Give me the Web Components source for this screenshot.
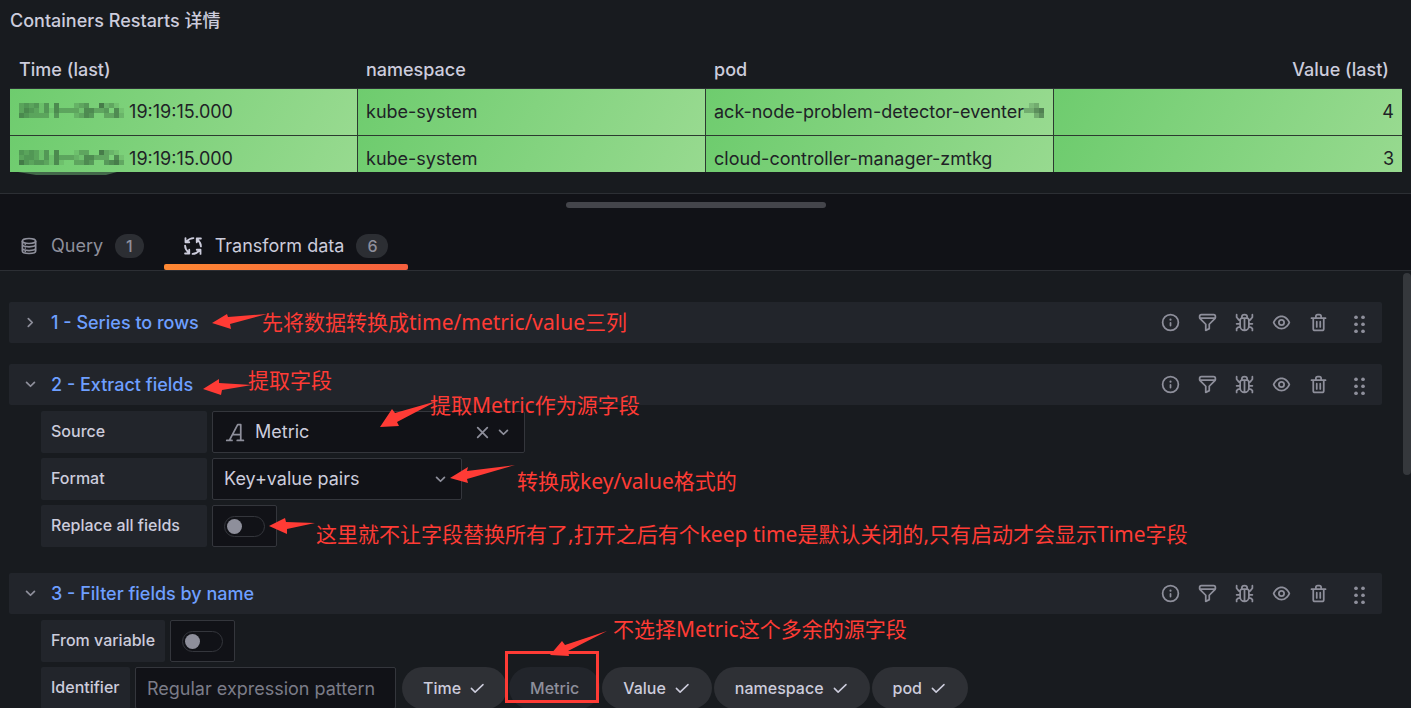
<!DOCTYPE html>
<html lang="zh-CN">
<head>
<meta charset="utf-8">
<title>Containers Restarts 详情</title>
<style>
  html, body { margin: 0; height: 100%; background: #111217; }
  body { overflow: hidden; }
</style>
</head>
<body>
<panel-editor>
  <restarts-panel slot="preview" heading="Containers Restarts 详情"></restarts-panel>
  <editor-tabs slot="tabs"></editor-tabs>

  <transform-row heading="1 - Series to rows"></transform-row>

  <transform-row heading="2 - Extract fields" open>
    <select-field caption="Source" value="Metric" icon="font" clearable style="--label: 166px; --control: 313px"></select-field>
    <select-field caption="Format" value="Key+value pairs" style="--label: 166px; --control: 250px"></select-field>
    <switch-field caption="Replace all fields" style="--label: 166px"></switch-field>
  </transform-row>

  <transform-row heading="3 - Filter fields by name" open>
    <switch-field caption="From variable" style="--label: 124px"></switch-field>
    <text-field caption="Identifier" hint="Regular expression pattern" style="--label: 89px; --control: 261px">
      <filter-pill selected>Time</filter-pill>
      <filter-pill>Metric</filter-pill>
      <filter-pill selected>Value</filter-pill>
      <filter-pill selected>namespace</filter-pill>
      <filter-pill selected>pod</filter-pill>
    </text-field>
  </transform-row>

  <note-layer slot="notes"></note-layer>
</panel-editor>

<script>
const ICONS = {
  info: '<path d="M12,2A10,10,0,1,0,22,12,10,10,0,0,0,12,2Zm0,18a8,8,0,1,1,8-8A8,8,0,0,1,12,20Zm0-8.5a1,1,0,0,0-1,1v3a1,1,0,0,0,2,0v-3A1,1,0,0,0,12,11.5Zm0-4a1.25,1.25,0,1,0,1.25,1.25A1.25,1.25,0,0,0,12,7.5Z"/>',
  filter: '<path d="M19,2H5A3,3,0,0,0,2,5V6.17a3,3,0,0,0,.25,1.2l0,.06a2.81,2.81,0,0,0,.59.86L9,14.41V21a1,1,0,0,0,.47.85A1,1,0,0,0,10,22a1,1,0,0,0,.45-.11l4-2A1,1,0,0,0,15,19V14.41l6.12-6.12a2.81,2.81,0,0,0,.59-.86l0-.06A3,3,0,0,0,22,6.17V5A3,3,0,0,0,19,2ZM13.29,13.29A1,1,0,0,0,13,14v4.38l-2,1V14a1,1,0,0,0-.29-.71L5.41,8H18.59ZM20,6H4V5A1,1,0,0,1,5,4H19a1,1,0,0,1,1,1Z"/>',
  bug: '<g fill="none" stroke="currentColor" stroke-width="2" stroke-linecap="round" stroke-linejoin="round"><path d="M7 9.500Q7 7 9.500 7h5Q17 7 17 9.500V16a5 5 0 0 1-10 0ZM12 7v14M9 7V5.500a3 2.500 0 0 1 6 0V7M7 9.500L5.500 9 3 6V3M17 9.500l1.500-.5L21 6V3M7 13.500H3M17 13.500h4M7 17l-2.500.5L3 19v2M17 17l2.500.5L21 19v2"/></g>',
  eye: '<path d="M21.92,11.6C19.9,6.91,16.1,4,12,4S4.1,6.91,2.08,11.6a1,1,0,0,0,0,.8C4.1,17.09,7.9,20,12,20s7.9-2.91,9.92-7.6A1,1,0,0,0,21.92,11.6ZM12,18c-3.17,0-6.17-2.29-7.9-6C5.83,8.29,8.83,6,12,6s6.17,2.29,7.9,6C18.17,15.71,15.17,18,12,18ZM12,8a4,4,0,1,0,4,4A4,4,0,0,0,12,8Zm0,6a2,2,0,1,1,2-2A2,2,0,0,1,12,14Z"/>',
  trash: '<path d="M10,18a1,1,0,0,0,1-1V11a1,1,0,0,0-2,0v6A1,1,0,0,0,10,18ZM20,6H16V5a3,3,0,0,0-3-3H11A3,3,0,0,0,8,5V6H4A1,1,0,0,0,4,8H5V19a3,3,0,0,0,3,3h8a3,3,0,0,0,3-3V8h1a1,1,0,0,0,0-2ZM10,5a1,1,0,0,1,1-1h2a1,1,0,0,1,1,1V6H10Zm7,14a1,1,0,0,1-1,1H8a1,1,0,0,1-1-1V8H17Zm-3-1a1,1,0,0,0,1-1V11a1,1,0,0,0-2,0v6A1,1,0,0,0,14,18Z"/>',
  grip: '<circle cx="8" cy="6" r="2.100"/><circle cx="16" cy="6" r="2.100"/><circle cx="8" cy="14" r="2.100"/><circle cx="16" cy="14" r="2.100"/><circle cx="8" cy="22" r="2.100"/><circle cx="16" cy="22" r="2.100"/>',
  right: '<path d="M9.500 7.500l4.500 4.500-4.500 4.500" fill="none" stroke="currentColor" stroke-width="2" stroke-linecap="round" stroke-linejoin="round"/>',
  down: '<path d="M7.500 9.500l4.500 4.500 4.500-4.500" fill="none" stroke="currentColor" stroke-width="2" stroke-linecap="round" stroke-linejoin="round"/>',
  times: '<path d="M6.500 6.500l11 11M17.500 6.500l-11 11" fill="none" stroke="currentColor" stroke-width="2" stroke-linecap="round"/>',
  check: '<path d="M4.500 12.500l5 5L20 7.500" fill="none" stroke="currentColor" stroke-width="2" stroke-linecap="round" stroke-linejoin="round"/>',
  font: '<path d="M2 21h6M14 21h7M5 21L14.500 3H18v18M8.500 14.500H18" fill="none" stroke="currentColor" stroke-width="2" stroke-linecap="round" stroke-linejoin="round"/>',
  database: '<g fill="none" stroke="currentColor" stroke-width="2"><ellipse cx="12" cy="6" rx="8" ry="3"/><path d="M4 6v12c0 1.700 3.600 3 8 3s8-1.300 8-3V6M4 10c0 1.700 3.600 3 8 3s8-1.300 8-3M4 14.500c0 1.700 3.600 3 8 3s8-1.300 8-3"/></g><circle cx="7.500" cy="10" r="1"/><circle cx="7.500" cy="14.500" r="1"/><circle cx="7.500" cy="18.500" r="1"/>',
  process: [0, 90, 180, 270].map(a => `<path transform="rotate(${a} 12 12)" d="M12.500 2.500Q8 2.500 4.500 6.500M3 2.500V7.500H7.500" fill="none" stroke="currentColor" stroke-width="2.200" stroke-linecap="round" stroke-linejoin="round"/>`).join('')
};

const RESET = `
  *, *::before, *::after { box-sizing: border-box; }
  :host { display: block; }
  button, input, select { font: inherit; color: inherit; margin: 0; padding: 0; border: 0; background: none; }
`;

class Base extends HTMLElement {
  connectedCallback() {
    if (this.shadowRoot) return;
    this.attachShadow({ mode: 'open' }).innerHTML = `<style>${RESET}${this.css()}</style>${this.html()}`;
  }
  css() { return ''; }
}

customElements.define('ui-icon', class extends Base {
  css() { return `
    :host { display: inline-flex; flex: none; width: var(--size, 21px); height: var(--size, 21px); }
    svg { width: 100%; height: 100%; overflow: visible; fill: currentColor; }`; }
  html() { return `<svg viewBox="0 0 24 24" aria-hidden="true">${ICONS[this.getAttribute('name')]}</svg>`; }
});

customElements.define('panel-editor', class extends Base {
  css() { return `
    :host { display: flex; flex-direction: column; height: 100vh; position: relative; overflow: hidden;
      font: 400 18px/24px Inter, "Noto Sans CJK SC", sans-serif; color: #ccccdc; background: #111217; }
    .handle { flex: none; display: flex; justify-content: center; padding: 8px 20px 14px 0; }
    .handle i { width: 260px; height: 6px; border-radius: 3px; background: #44454b; }
    .body { flex: 1; min-height: 0; display: flex; background: #181b1f; border-top: 1px solid #2c2f34; }
    .list { flex: 1; min-width: 0; display: flex; flex-direction: column; gap: 21px; padding: 31px 21px 0 9px; overflow: hidden; }
    .bar { flex: none; width: 8px; height: 202px; margin-top: 2px; border-radius: 4px; background: #35383c; }`; }
  html() { return `
    <slot name="preview"></slot>
    <div class="handle"><i></i></div>
    <slot name="tabs"></slot>
    <div class="body"><main class="list"><slot></slot></main><div class="bar"></div></div>
    <slot name="notes"></slot>`; }
});

/* Blocks of pixels that hide part of a value */
customElements.define('pixel-mask', class extends Base {
  css() { return `
    :host { display: inline-block; vertical-align: baseline; }
    svg { display: block; }`; }
  html() {
    const rows = this.getAttribute('rows').split('/').map(r => [...r].map(Number));
    const w = rows[0].length * 5, h = rows.length * 5;
    const cells = rows.flatMap((r, y) => r.map((v, x) =>
      v ? `<rect x="${x * 5}" y="${y * 5}" width="5" height="5" fill-opacity="${v / 10}"/>` : ''));
    return `<svg width="${w}" height="${h}" fill="#24452c" shape-rendering="crispEdges" aria-hidden="true">${cells.join('')}</svg>`;
  }
});

customElements.define('restarts-panel', class extends Base {
  css() { return `
    :host { flex: none; background: #181b1f; border-bottom: 1px solid #2c2f34; }
    h2 { margin: 0; padding: 9px 10px 8px; font-size: 18px; line-height: 24px; font-weight: 500; }
    .clip { margin: 9px 9px 0 10px; height: 122px; overflow: hidden; }
    table { width: 100%; table-layout: fixed; border-spacing: 0; }
    th, td { height: 47px; padding: 0 8px 0 9px; text-align: left; white-space: nowrap; }
    th { height: 39px; padding-top: 2px; font-weight: 500; border-bottom: 1px solid #2c2f34; }
    td { color: #202226; background: linear-gradient(120deg, #6ecc6e, #98da90); border-bottom: 1px solid #2c3a30; }
    td + td, th + th { padding-left: 8px; }
    td:not(:last-child) { border-right: 1px solid #2c3a30; }
    th:last-child { padding-right: 13px; }
    th:last-child, td:last-child { text-align: right; }
    .smear { height: 21px; padding-left: 18px; }
    .smear svg { display: block; }`; }
  html() {
    const a = '343414050002340062310/354314153333155334051/543333040002354003352';
    const b = '434314050001330063210/344314153332155333051/643443151003354004563';
    const time = m => `<pixel-mask rows="${m}"></pixel-mask> 19:19:15.000`;
    return `
    <h2>${this.getAttribute('heading')}</h2>
    <div class="clip"><table>
      <thead><tr><th>Time (last)</th><th>namespace</th><th>pod</th><th>Value (last)</th></tr></thead>
      <tbody>
        <tr><td>${time(a)}</td><td>kube-system</td><td>ack-node-problem-detector-eventer<pixel-mask rows="0230/3356/0035"></pixel-mask></td><td>4</td></tr>
        <tr><td>${time(b)}</td><td>kube-system</td><td>cloud-controller-manager-zmtkg</td><td>3</td></tr>
      </tbody></table></div>
    <div class="smear"><svg width="100" height="3" fill="#43694a" aria-hidden="true"><path d="M0 0H99L88 3H18Z"/></svg></div>`;
  }
});

customElements.define('editor-tabs', class extends Base {
  css() { return `
    :host { flex: none; }
    nav { display: flex; height: 48px; align-items: flex-end; }
    a { position: relative; display: flex; align-items: center; gap: 12px; height: 49px; padding: 0 20px 0 19px; color: #8e8f9b; text-decoration: none; }
    a[aria-current] { color: #ccccdc; }
    a[aria-current]::after { content: ""; position: absolute; left: 0; right: 0; bottom: 0; height: 6px; border-radius: 2px; background: linear-gradient(90deg, #ff8833, #f55f3e); }
    b { padding: 0 11px; border-radius: 12px; font-size: 16px; font-weight: 500; line-height: 24px; color: #8e8f9b; background: #2c2e33; }
    ui-icon { --size: 20px; }`; }
  html() { return `<nav>
    <a href="#query"><ui-icon name="database"></ui-icon>Query<b>1</b></a>
    <a href="#transform" aria-current="page"><ui-icon name="process"></ui-icon>Transform data<b>6</b></a></nav>`; }
});

customElements.define('transform-row', class extends Base {
  css() { return `
    header { display: flex; align-items: center; height: 41px; padding: 0 12px 0 11px; border-radius: 2px; background: #22252b; color: #8e8f9b; }
    button { display: flex; cursor: pointer; }
    .title { flex: 1; align-items: center; gap: 10px; text-align: left; }
    h3 { margin: 0; font-size: 18px; line-height: 24px; font-weight: 500; color: #6e9fff; }
    .tools { display: flex; align-items: center; gap: 16px; margin-right: 20px; }
    .body { display: flex; flex-direction: column; gap: 5px; padding: 6px 0 5px 32px; }`; }
  html() {
    const open = this.hasAttribute('open');
    const tools = [['info', 'Help'], ['filter', 'Filter'], ['bug', 'Debug'], ['eye', 'Disable'], ['trash', 'Remove']];
    return `<header>
      <button class="title" aria-expanded="${open}"><ui-icon name="${open ? 'down' : 'right'}"></ui-icon><h3>${this.getAttribute('heading')}</h3></button>
      <div class="tools">${tools.map(([i, t]) => `<button aria-label="${t}"><ui-icon name="${i}"></ui-icon></button>`).join('')}</div>
      <button aria-label="Move"><ui-icon name="grip"></ui-icon></button></header>
      ${open ? '<div class="body"><slot></slot></div>' : ''}`;
  }
});

class Field extends Base {
  css() { return `
    :host { display: flex; gap: 5px; min-height: 42px; }
    label { flex: none; width: var(--label); height: 42px; padding: 0 10px; border-radius: 2px; background: #22252b; font-size: 16px; font-weight: 500; line-height: 41px; white-space: nowrap; }
    .control { flex: none; position: relative; width: var(--control); height: 42px; display: flex; align-items: center; background: #111217; border: 1px solid #34363c; border-radius: 2px; }`; }
  html() { return `<label for="c">${this.getAttribute('caption')}</label>${this.control()}<slot></slot>`; }
}

customElements.define('select-field', class extends Field {
  css() { return super.css() + `
    select { appearance: none; width: 100%; height: 100%; padding-left: 11px; outline: 0; }
    .lead { position: absolute; left: 12px; top: 10px; color: #8e8f9b; }
    .lead + select { padding-left: 42px; }
    .end { position: absolute; right: 10px; top: 10px; display: flex; color: #8e8f9b; pointer-events: none; }
    .end button { pointer-events: auto; display: flex; }`; }
  control() {
    const icon = this.getAttribute('icon');
    return `<div class="control">${icon ? `<ui-icon class="lead" name="${icon}"></ui-icon>` : ''}
      <select id="c"><option>${this.getAttribute('value')}</option></select>
      <span class="end">${this.hasAttribute('clearable') ? '<button aria-label="Clear"><ui-icon name="times"></ui-icon></button>' : ''}<ui-icon name="down"></ui-icon></span></div>`;
  }
});

customElements.define('switch-field', class extends Field {
  css() { return super.css() + `
    .control { width: 65px; justify-content: center; }
    input { appearance: none; width: 41px; height: 21px; border: 1px solid #34363c; border-radius: 11px; padding: 2px; }
    input::before { content: ""; display: block; width: 15px; height: 15px; border-radius: 50%; background: #8e8f9b; }
    input:checked::before { margin-left: auto; }`; }
  control() { return '<div class="control"><input id="c" type="checkbox" role="switch"></div>'; }
});

customElements.define('text-field', class extends Field {
  css() { return super.css() + `
    :host { flex-wrap: wrap; gap: 5px 2px; }
    label { margin-right: 3px; }
    .control { margin-right: 4px; }
    input { width: 100%; height: 100%; padding: 0 11px; outline: 0; }
    input::placeholder { color: #7b7c88; opacity: 1; }`; }
  control() { return `<div class="control"><input id="c" type="text" placeholder="${this.getAttribute('hint')}"></div>`; }
});

customElements.define('filter-pill', class extends Base {
  css() { return `
    button { display: flex; align-items: center; gap: 7px; height: 42px; padding: 0 21px; border-radius: 21px; font-size: 16px; font-weight: 500; background: #22252b; color: #8e8f9b; cursor: pointer; }
    :host([selected]) button { background: #2e3035; color: #ccccdc; }
    ui-icon { --size: 18px; }`; }
  html() {
    const on = this.hasAttribute('selected');
    return `<button aria-pressed="${on}"><slot></slot>${on ? '<ui-icon name="check"></ui-icon>' : ''}</button>`;
  }
});

/* Red hand-placed remarks with arrows, floating over the editor */
customElements.define('note-layer', class extends Base {
  css() { return `
    :host { position: absolute; inset: 0; pointer-events: none; overflow: hidden; color: #ff3b35;
      font: 400 21px/24px "Noto Sans", "Noto Sans CJK SC", sans-serif; }
    svg { position: absolute; left: 0; top: 0; width: 100%; height: 100%; }
    span { position: absolute; white-space: nowrap; }`; }
  html() {
    const notes = [
      [262, 310, '先将数据转换成time/metric/value三列'],
      [248, 368, '提取字段'],
      [430, 393, '提取Metric作为源字段'],
      [517, 469, '转换成key/value格式的'],
      [316, 522, '这里就不让字段替换所有了,打开之后有个keep time是默认关闭的,只有启动才会显示Time字段'],
      [613, 617, '不选择Metric这个多余的源字段']
    ];
    const arrows = [
      '212,323 227,314 228,317 267,314 230,324 231,329',
      '203,389 219,379 219,383 252,385 222,390 221,395',
      '380,427 392,409 395,413 437,401 397,422 399,426',
      '450,478 468,467 467,471 515,465 467,479 468,483',
      '269,526 285,518 286,522 315,523 287,529 287,534',
      '550,655 562,641 565,645 607,631 568,651 569,656'
    ];
    return `<svg fill="currentColor" aria-hidden="true">${arrows.map(p => `<polygon points="${p}"/>`).join('')}
      <rect x="506.500" y="652.500" width="91" height="49" fill="none" stroke="currentColor" stroke-width="3"/></svg>
      ${notes.map(([x, y, t]) => `<span style="left:${x}px;top:${y}px">${t}</span>`).join('')}`;
  }
});
</script>
</body>
</html>
